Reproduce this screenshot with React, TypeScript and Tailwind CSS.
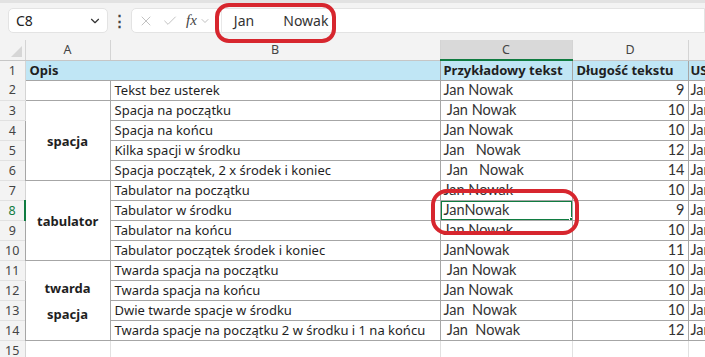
import { ChevronDown, X, Check } from "lucide-react";

type Row = { n: number; b: string; c: string; d: number };

const ROWS: Row[] = [
  { n: 2, b: "Tekst bez usterek", c: "Jan Nowak", d: 9 },
  { n: 3, b: "Spacja na początku", c: " Jan Nowak", d: 10 },
  { n: 4, b: "Spacja na końcu", c: "Jan Nowak ", d: 10 },
  { n: 5, b: "Kilka spacji w środku", c: "Jan   Nowak", d: 12 },
  { n: 6, b: "Spacja początek, 2 x środek i koniec", c: " Jan   Nowak ", d: 14 },
  { n: 7, b: "Tabulator na początku", c: "Jan Nowak", d: 10 },
  { n: 8, b: "Tabulator w środku", c: "JanNowak", d: 9 },
  { n: 9, b: "Tabulator na końcu", c: "Jan Nowak", d: 10 },
  { n: 10, b: "Tabulator początek środek i koniec", c: "JanNowak", d: 11 },
  { n: 11, b: "Twarda spacja na początku", c: " Jan Nowak", d: 10 },
  { n: 12, b: "Twarda spacja na końcu", c: "Jan Nowak", d: 10 },
  { n: 13, b: "Dwie twarde spacje w środku", c: "Jan  Nowak", d: 10 },
  { n: 14, b: "Twarda spacje na początku 2 w środku i 1 na końcu", c: " Jan  Nowak", d: 12 },
];

// merged cells in column A
const GROUPS: Record<number, { span: number; label: string[] }> = {
  3: { span: 4, label: ["spacja"] },
  7: { span: 4, label: ["tabulator"] },
  11: { span: 4, label: ["twarda", "spacja"] },
};

const aptos = { fontFamily: '"Noto Sans", "Open Sans", sans-serif' };
const calibri = { fontFamily: 'Lato, "Noto Sans", sans-serif' };

const cell = "border border-[#a6a6a6] h-5 p-0 align-bottom overflow-hidden whitespace-nowrap leading-[18px]";
const rowHead = "h-5 p-0 bg-[#f3f3f3] text-center text-[12.5px] leading-[18px]";

export default function App() {
  return (
    <div className="w-[705px] h-[357px] overflow-hidden bg-white relative text-[#1f1f1f]" style={aptos}>
      {/* formula bar */}
      <div className="h-[40px] bg-[#f3f3f3] border-t-[3px] border-[#e2e2e2] flex items-start pt-[5px] pl-2">
        <div className="w-[100px] h-[25px] bg-white rounded-[5px] border border-[#e3e3e3] flex items-center justify-between pl-[7px] pr-[5px]">
          <span className="text-[14px] text-[#222]">C8</span>
          <ChevronDown className="w-[14px] h-[14px] text-[#333]" strokeWidth={2} />
        </div>
        <div className="w-[23px] h-[25px] flex items-center justify-center text-[#444] text-[15px] font-bold">⋮</div>
        <div className="flex-1 h-[25px] bg-white rounded-l-[5px] border border-[#e3e3e3] flex items-center pl-[6px]">
          <X className="w-[16px] h-[16px] text-[#c2c2c2] mr-[8px]" strokeWidth={1.5} />
          <Check className="w-[16px] h-[16px] text-[#c2c2c2] mr-[8px]" strokeWidth={1.5} />
          <span className="text-[15px] italic text-[#444] mr-[2px]" style={{ fontFamily: '"Liberation Serif", serif' }}>
            fx
          </span>
          <ChevronDown className="w-[12px] h-[12px] text-[#aaa]" strokeWidth={1.5} />
          <span className="ml-[10px] w-px h-[25px] bg-[#e8e8e8]" />
          <span className="ml-[12px] text-[14px] text-[#333] whitespace-pre">Jan        Nowak</span>
        </div>
      </div>

      {/* sheet */}
      <table className="table-fixed border-collapse w-[800px] text-[13px]">
        <colgroup>
          <col className="w-[25px]" />
          <col className="w-[85px]" />
          <col className="w-[330px]" />
          <col className="w-[132px]" />
          <col className="w-[116px]" />
          <col className="w-[112px]" />
        </colgroup>
        <thead>
          <tr className="h-5 text-[12.5px] text-[#444] bg-[#f3f3f3] leading-[18px]">
            <th className="h-5 p-0 border-r border-[#d4d4d4] border-b border-b-[#c6c6c6] relative">
              <svg className="absolute right-[3px] bottom-[3px]" width="11" height="11" viewBox="0 0 11 11">
                <path d="M11 0 L11 11 L0 11 Z" fill="#d6d6d6" />
              </svg>
            </th>
            <th className="h-5 p-0 font-normal border-r border-[#d4d4d4] border-b border-b-[#c6c6c6]">A</th>
            <th className="h-5 p-0 font-normal border-r border-[#d4d4d4] border-b border-b-[#c6c6c6]">B</th>
            <th className="h-5 p-0 font-normal bg-[#d9d9d9] border-r border-[#d4d4d4] border-b-2 border-b-[#107c41]">C</th>
            <th className="h-5 p-0 font-normal border-r border-[#d4d4d4] border-b border-b-[#c6c6c6]">D</th>
            <th className="h-5 p-0 font-normal border-b border-b-[#c6c6c6]">E</th>
          </tr>
        </thead>
        <tbody>
          <tr className="h-5 bg-[#c0e6f5] font-bold leading-[18px]">
            <td className={`${rowHead} font-normal text-[#444] border-r border-[#d4d4d4]`}>1</td>
            <td className="h-5 p-0 pl-[4px] align-bottom pb-[1px]">Opis</td>
            <td className="h-5 p-0 border-r border-[#a6a6a6]" />
            <td className="h-5 p-0 pl-[3px] align-bottom pb-[1px] whitespace-nowrap border-r border-[#a6a6a6]">Przykładowy tekst</td>
            <td className="h-5 p-0 pl-[4px] align-bottom pb-[1px] whitespace-nowrap border-r border-[#a6a6a6]">Długość tekstu</td>
            <td className="h-5 p-0 pl-[2px] align-bottom pb-[1px] whitespace-nowrap overflow-hidden">USUŃ</td>
          </tr>
          {ROWS.map((r) => {
            const g = GROUPS[r.n];
            const inGroup = r.n > 2;
            const sel = r.n === 8;
            return (
              <tr key={r.n} className="h-5">
                <td
                  className={`${rowHead} border-b border-[#e1e1e1] ${
                    sel ? "text-[#107c41] border-r-2 border-r-[#107c41] bg-[#e3e3e3]" : "text-[#444] border-r border-r-[#d4d4d4]"
                  }`}
                >
                  {r.n}
                </td>
                {!inGroup && <td className={cell} />}
                {g && (
                  <td rowSpan={g.span} className="border border-[#a6a6a6] p-0 text-center align-middle font-bold leading-[26px]">
                    {g.label.map((l) => (
                      <div key={l}>{l}</div>
                    ))}
                  </td>
                )}
                <td className={`${cell} pl-[4px] pb-[1px]`}>{r.b}</td>
                <td className={`${cell} pl-[3px] pb-[1px] whitespace-pre text-[14.5px] text-[#333] relative`} style={calibri}>
                  {r.c}
                  {sel && (
                    <div className="absolute inset-[-1px] border-2 border-[#107c41]">
                      <div className="absolute right-[-4px] bottom-[-4px] w-[6px] h-[6px] bg-[#107c41] border border-white" />
                    </div>
                  )}
                </td>
                <td className={`${cell} text-right pr-[3px] pb-[1px] text-[14.5px] text-[#333]`} style={calibri}>
                  {r.d}
                </td>
                <td className={`${cell} pl-[2px] pb-[1px] text-[14.5px] text-[#333]`} style={calibri}>
                  {r.c.trim()}
                </td>
              </tr>
            );
          })}
          <tr className="h-5">
            <td className={`${rowHead} text-[#444] border-r border-[#d4d4d4]`}>15</td>
            <td className="border-r border-[#e1e1e1]" />
            <td className="border-r border-[#e1e1e1]" />
            <td className="border-r border-[#e1e1e1]" />
            <td className="border-r border-[#e1e1e1]" />
            <td />
          </tr>
        </tbody>
      </table>

      {/* red annotations */}
      <div className="absolute left-[215px] top-[3px] w-[121px] h-[40px] border-[4px] border-[#d7262e] rounded-[14px]" />
      <div className="absolute left-[431px] top-[189px] w-[148px] h-[46px] border-[4px] border-[#d7262e] rounded-[16px]" />
    </div>
  );
}
